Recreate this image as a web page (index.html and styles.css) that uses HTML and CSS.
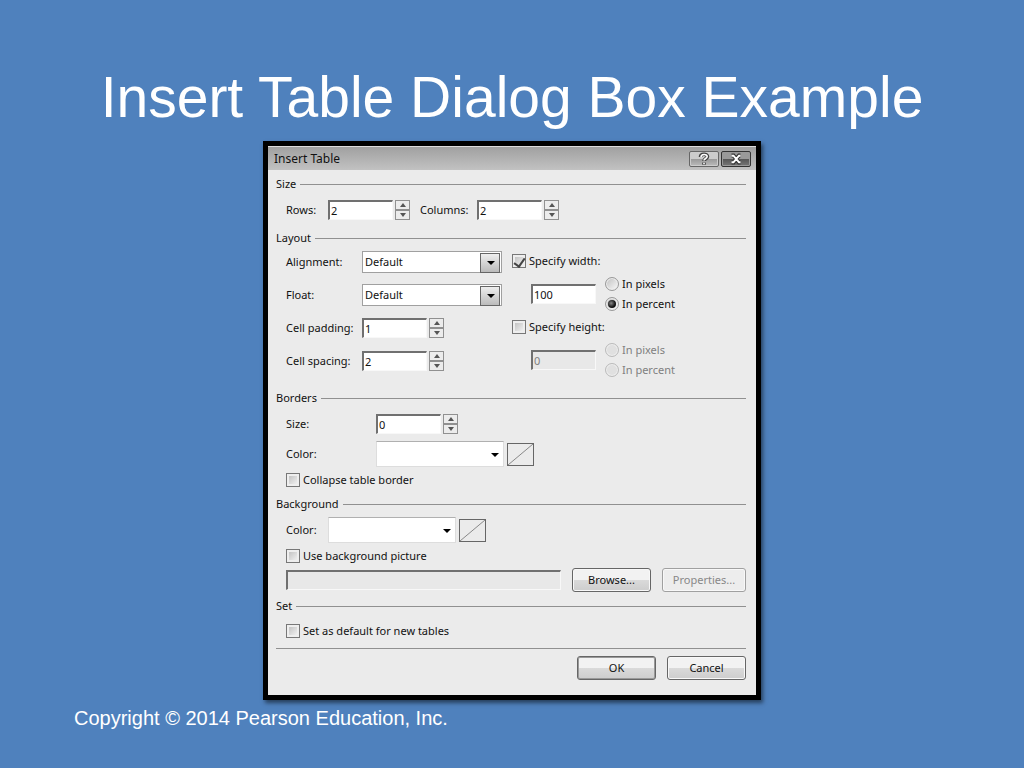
FILE: index.html
```html
<!DOCTYPE html>
<html lang="en">
<head>
    <meta charset="UTF-8">
    <meta name="viewport" content="width=device-width, initial-scale=1.0">
    <title>Insert Table Dialog Box Example</title>
    <link rel="stylesheet" href="styles.css">
</head>
<body>
    <h1>Insert Table Dialog Box Example</h1>

    <form class="dialog">
        <div class="title-bar">
            <span class="title">Insert Table</span>
            <button type="button" class="caption-btn" aria-label="Help">
                <svg width="12" height="14" viewBox="0 0 12 14"><path d="M2.500 5C2.500 1.500 9.500 1.500 9.500 4.600C9.500 6.700 6 6.500 6 9M6 10.500V12.800" fill="none" stroke="#444" stroke-width="3.600"/><path d="M3 5C3 1.700 9.200 1.700 9.200 4.600C9.200 6.500 6 6.500 6 8.600M6 10.700V12.300" fill="none" stroke="#fff" stroke-width="1.600"/></svg>
            </button>
            <button type="button" class="caption-btn close" aria-label="Close">
                <svg width="16" height="12" viewBox="0 0 16 12"><path d="M3.500 2.500H5.500L11 9.500H12.500M12.500 2.500H11L5.500 9.500H3.500" fill="none" stroke="#333" stroke-width="4"/><path d="M3.500 2.700H5.500L11 9.300H12.500M12.500 2.700H11L5.500 9.300H3.500" fill="none" stroke="#fff" stroke-width="2"/></svg>
            </button>
        </div>

        <div class="content">
            <fieldset>
                <legend>Size</legend>
                <div class="body">
                    <div class="row">
                        <label class="short" for="rows">Rows:</label>
                        <input class="text" type="text" id="rows" value="2">
                        <span class="spin"><button type="button" aria-label="More rows"></button><button type="button" class="down" aria-label="Fewer rows"></button></span>
                        <label class="next" for="columns">Columns:</label>
                        <input class="text" type="text" id="columns" value="2">
                        <span class="spin"><button type="button" aria-label="More columns"></button><button type="button" class="down" aria-label="Fewer columns"></button></span>
                    </div>
                </div>
            </fieldset>

            <fieldset>
                <legend>Layout</legend>
                <div class="layout">
                    <div class="left">
                        <div class="row">
                            <label for="alignment">Alignment:</label>
                            <span class="combo"><select id="alignment"><option>Default</option></select></span>
                        </div>
                        <div class="row">
                            <label for="float">Float:</label>
                            <span class="combo"><select id="float"><option>Default</option></select></span>
                        </div>
                        <div class="row">
                            <label for="padding">Cell padding:</label>
                            <input class="text" type="text" id="padding" value="1">
                            <span class="spin"><button type="button" aria-label="More padding"></button><button type="button" class="down" aria-label="Less padding"></button></span>
                        </div>
                        <div class="row">
                            <label for="spacing">Cell spacing:</label>
                            <input class="text" type="text" id="spacing" value="2">
                            <span class="spin"><button type="button" aria-label="More spacing"></button><button type="button" class="down" aria-label="Less spacing"></button></span>
                        </div>
                    </div>
                    <div class="right">
                        <div class="check tall">
                            <input type="checkbox" id="setWidth" checked>
                            <label for="setWidth">Specify width:</label>
                        </div>
                        <div class="measure">
                            <input class="text" type="text" value="100" aria-label="Width">
                            <div class="units">
                                <div class="unit"><input type="radio" name="widthUnit" id="widthPx"><label for="widthPx">In pixels</label></div>
                                <div class="unit"><input type="radio" name="widthUnit" id="widthPc" checked><label for="widthPc">In percent</label></div>
                            </div>
                        </div>
                        <div class="check tall">
                            <input type="checkbox" id="setHeight">
                            <label for="setHeight">Specify height:</label>
                        </div>
                        <div class="measure">
                            <input class="text" type="text" value="0" aria-label="Height" disabled>
                            <div class="units">
                                <div class="unit"><input type="radio" name="heightUnit" id="heightPx" disabled><label for="heightPx">In pixels</label></div>
                                <div class="unit"><input type="radio" name="heightUnit" id="heightPc" disabled><label for="heightPc">In percent</label></div>
                            </div>
                        </div>
                    </div>
                </div>
            </fieldset>

            <fieldset>
                <legend>Borders</legend>
                <div class="body">
                    <div class="row">
                        <label class="wide" for="borderSize">Size:</label>
                        <input class="text" type="text" id="borderSize" value="0">
                        <span class="spin"><button type="button" aria-label="Thicker"></button><button type="button" class="down" aria-label="Thinner"></button></span>
                    </div>
                    <div class="row">
                        <label class="wide" for="borderColor">Color:</label>
                        <span class="combo color"><select id="borderColor"><option></option></select></span>
                        <button type="button" class="swatch" aria-label="Border color"><svg width="25" height="21" viewBox="0 0 25 21"><path d="M0 21L25 0" stroke="#888"/></svg></button>
                    </div>
                    <div class="check">
                        <input type="checkbox" id="collapse">
                        <label for="collapse">Collapse table border</label>
                    </div>
                </div>
            </fieldset>

            <fieldset>
                <legend>Background</legend>
                <div class="body">
                    <div class="row">
                        <label class="short" for="bgColor">Color:</label>
                        <span class="combo color"><select id="bgColor"><option></option></select></span>
                        <button type="button" class="swatch" aria-label="Background color"><svg width="25" height="21" viewBox="0 0 25 21"><path d="M0 21L25 0" stroke="#888"/></svg></button>
                    </div>
                    <div class="check">
                        <input type="checkbox" id="usePicture">
                        <label for="usePicture">Use background picture</label>
                    </div>
                    <div class="picture">
                        <input class="text path" type="text" aria-label="Background picture" disabled>
                        <button type="button" class="btn">Browse...</button>
                        <button type="button" class="btn" disabled>Properties...</button>
                    </div>
                </div>
            </fieldset>

            <fieldset>
                <legend>Set</legend>
                <div class="body">
                    <div class="check tall">
                        <input type="checkbox" id="setDefault">
                        <label for="setDefault">Set as default for new tables</label>
                    </div>
                </div>
            </fieldset>

            <div class="actions">
                <button type="button" class="btn default">OK</button>
                <button type="button" class="btn">Cancel</button>
            </div>
        </div>
    </form>

    <footer>Copyright © 2014 Pearson Education, Inc.</footer>
</body>
</html>
```

FILE: styles.css
```css
* {
    box-sizing: border-box;
}

body {
    margin: 0;
    min-height: 100vh;
    background: #4f81bd;
    color: white;
    font-family: "Liberation Sans", Arial, sans-serif;
    display: flex;
    flex-direction: column;
    align-items: center;
}

button,
input,
select {
    margin: 0;
    font: inherit;
    color: inherit;
}

h1 {
    margin: 0;
    padding-top: 53px;
    font-size: 57px;
    line-height: 88px;
    font-weight: normal;
    text-align: center;
}

footer {
    align-self: stretch;
    padding: 6px 74px;
    font-size: 20px;
    line-height: 24px;
}

.dialog {
    width: 100%;
    max-width: 498px;
    border: 5px solid black;
    background: #ebebeb;
    color: #111;
    box-shadow: 2px 3px 4px rgba(0, 0, 0, 0.5);
    font-family: "Noto Sans", Tahoma, sans-serif;
    font-size: 11px;
    line-height: 16px;
}

.title-bar {
    display: flex;
    align-items: center;
    gap: 2px;
    height: 24px;
    padding: 0 5px 0 6px;
    border-top: 1px solid #ddd;
    background: linear-gradient(#a0a0a0, #c2c2c2);
}

.title {
    flex: 1;
    font-size: 12px;
}

.caption-btn {
    display: flex;
    align-items: center;
    justify-content: center;
    width: 30px;
    height: 16px;
    padding: 0;
    border: 1px solid #666;
    border-radius: 2px;
    background: linear-gradient(#ccc 50%, #999 50%, #bbb);
    box-shadow: inset 0 0 0 1px #ccc;
}

.caption-btn.close {
    border-color: #333;
    background: linear-gradient(#999 50%, #555 50%, #777);
    box-shadow: inset 0 0 0 1px #999;
}

.content {
    padding: 4px 10px 15px 8px;
}

fieldset {
    min-width: 0;
    margin: 0 0 4px;
    padding: 0;
    border: 0;
}

legend {
    display: flex;
    align-items: center;
    gap: 4px;
    width: 100%;
    height: 20px;
    padding: 0;
}

legend::after {
    content: "";
    flex: 1;
    height: 1px;
    background: #909090;
}

.body {
    display: flex;
    flex-direction: column;
    gap: 2px;
    padding: 2px 0 0 10px;
}

.row {
    display: flex;
    align-items: center;
    height: 28px;
}

.row label.short {
    width: 42px;
}

.row label.wide {
    width: 90px;
}

.row label.next {
    width: 57px;
    margin-left: 10px;
}

.text {
    width: 65px;
    height: 20px;
    padding: 0 1px;
    border: 1px solid #f8f8f8;
    border-top: 2px solid #707070;
    border-left: 2px solid #707070;
    border-radius: 0;
    background: white;
}

.text:disabled {
    background: #e8e8e8;
}

.text:disabled,
:disabled + label {
    color: #808080;
}

.spin {
    display: flex;
    flex-direction: column;
    margin-left: 2px;
}

.spin button {
    display: flex;
    align-items: center;
    justify-content: center;
    width: 15px;
    height: 10px;
    padding: 0;
    border: 1px solid #909090;
    border-radius: 0;
    background: #ececec;
}

.spin button::before {
    content: "";
    border: 3px solid transparent;
    border-top: 0;
    border-bottom: 4px solid #555;
}

.spin .down::before {
    border-top: 4px solid #555;
    border-bottom: 0;
}

.combo {
    position: relative;
    width: 140px;
    height: 22px;
}

.combo select {
    display: block;
    width: 100%;
    height: 100%;
    padding: 0 20px 1px 2px;
    appearance: none;
    border: 1px solid #a0a0a0;
    border-radius: 0;
    background: white;
}

/* drop-down button over the right end of the select */
.combo::after {
    content: "";
    position: absolute;
    top: 2px;
    right: 2px;
    width: 18px;
    height: 18px;
    border: 1px solid #666;
    background: linear-gradient(#eee, #bbb);
    pointer-events: none;
}

.combo::before {
    content: "";
    position: absolute;
    z-index: 1;
    top: 10px;
    right: 7px;
    border: 4px solid transparent;
    border-top: 4px solid black;
    border-bottom: 0;
    pointer-events: none;
}

.combo.color {
    width: 128px;
    height: 26px;
}

.combo.color select {
    border-color: #b0b0b0 #ddd #ddd;
}

.combo.color::after {
    display: none;
}

.combo.color::before {
    top: 12px;
    right: 5px;
}

.swatch {
    width: 27px;
    height: 23px;
    margin-left: 3px;
    padding: 0;
    border: 1px solid #666;
    border-radius: 0;
    background: #ebebeb;
}

.swatch svg {
    display: block;
}

.layout {
    display: flex;
    gap: 10px;
    padding: 0 0 4px 10px;
}

.left {
    display: flex;
    flex-direction: column;
    gap: 5px;
}

.left label {
    width: 76px;
}

.measure {
    display: flex;
    align-items: center;
    gap: 9px;
    padding-left: 19px;
}

.unit {
    display: flex;
    align-items: center;
    gap: 3px;
    height: 20px;
}

.check {
    display: flex;
    align-items: center;
    gap: 3px;
    height: 20px;
}

.check.tall {
    height: 26px;
}

input[type="checkbox"] {
    display: flex;
    align-items: center;
    justify-content: center;
    width: 14px;
    height: 14px;
    appearance: none;
    border: 1px solid #777;
    background: linear-gradient(135deg, #b8b8b8, #fafafa);
    box-shadow: inset 0 0 0 2px #eee;
}

input[type="checkbox"]:checked::before {
    content: "";
    width: 5px;
    height: 9px;
    border: solid #444;
    border-width: 0 2px 2px 0;
    transform: rotate(35deg);
}

input[type="radio"] {
    display: flex;
    align-items: center;
    justify-content: center;
    width: 14px;
    height: 14px;
    appearance: none;
    border: 1px solid #999;
    border-radius: 50%;
    background: linear-gradient(135deg, #c0c0c0, #fafafa);
    box-shadow: inset 0 0 0 1px #eee;
}

input[type="radio"]:checked::before {
    content: "";
    width: 8px;
    height: 8px;
    border-radius: 50%;
    background: radial-gradient(circle at 40% 40%, #888, #111 60%);
}

input[type="radio"]:disabled {
    border-color: #bbb;
    background: #e0e0e0;
}

.picture {
    display: flex;
    align-items: center;
}

.path {
    flex: 1;
    min-width: 0;
}

.btn {
    width: 79px;
    height: 24px;
    margin-left: 11px;
    padding: 0;
    border: 1px solid #666;
    border-radius: 3px;
    background: linear-gradient(#f2f2f2 50%, #dadada 50%, #cdcdcd);
    box-shadow: inset 0 0 0 1px #f8f8f8;
}

.picture .btn:last-child {
    width: 84px;
}

.btn:disabled {
    border-color: #a0a0a0;
    background: #ededed;
    color: #888;
}

.btn.default {
    box-shadow: inset 0 0 0 1px #999;
}

.actions {
    display: flex;
    justify-content: flex-end;
    padding-top: 7px;
    border-top: 1px solid #909090;
}
```
